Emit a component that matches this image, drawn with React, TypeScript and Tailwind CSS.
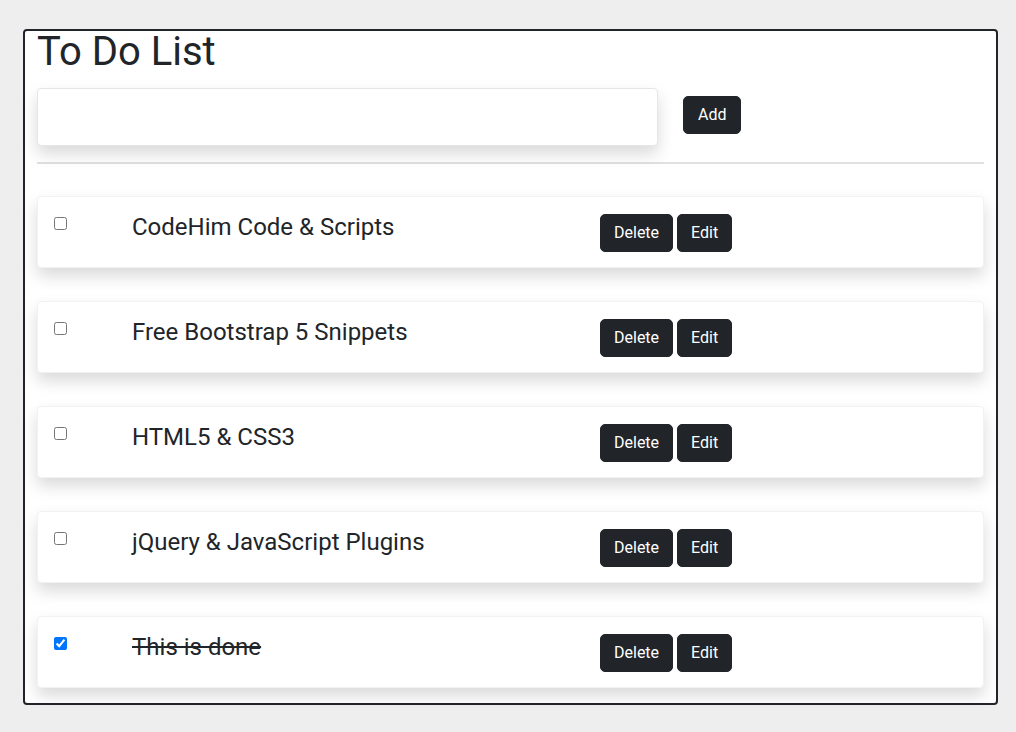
import React, { useState } from "react"

interface Todo {
  id: number
  text: string
  done: boolean
}

const initTodos: Todo[] = [
  { id: 1, text: "CodeHim Code & Scripts", done: false },
  { id: 2, text: "Free Bootstrap 5 Snippets", done: false },
  { id: 3, text: "HTML5 & CSS3", done: false },
  { id: 4, text: "jQuery & JavaScript Plugins", done: false },
  { id: 5, text: "This is done", done: true }
]

const btn =
  "py-1.5 text-base leading-6 text-white bg-[#212529] border border-[#212529] rounded-[5px]"

const App: React.FC = () => {
  const [todos, setTodos] = useState<Todo[]>(initTodos)
  const [draft, setDraft] = useState("")

  const toggle = (id: number) =>
    setTodos((prev) =>
      prev.map((t) => (t.id === id ? { ...t, done: !t.done } : t))
    )

  const remove = (id: number) =>
    setTodos((prev) => prev.filter((t) => t.id !== id))

  const add = () => {
    if (!draft.trim()) return
    setTodos((prev) => [...prev, { id: Date.now(), text: draft, done: false }])
    setDraft("")
  }

  return (
    <div
      className="min-h-[732px] bg-[#eeeeee] pt-[29px] pl-[23px] text-[#212529]"
      style={{ fontFamily: "Roboto, 'Liberation Sans', sans-serif" }}
    >
      <div className="w-[975px] bg-white border-2 border-[#212529] rounded-[4px] px-3 pt-[1px] pb-[15px]">
        <h1 className="text-[40px] leading-none font-normal">To Do List</h1>

        <div className="flex items-center mt-4">
          <input
            value={draft}
            onChange={(e) => setDraft(e.target.value)}
            className="w-[621px] h-[58px] px-3 text-base bg-white border border-[#e6e6e6] rounded-[4px] shadow-[0_0.5rem_1rem_rgba(0,0,0,0.15)] outline-none"
          />
          <button className={`${btn} px-[14px] ml-[25px] -mt-1`} onClick={add}>
            Add
          </button>
        </div>

        <div className="h-[2px] bg-[#e0e0e0] mt-4 mb-[32px]" />

        <div className="flex flex-col gap-[33px]">
          {todos.map((todo) => (
            <div
              key={todo.id}
              className="flex items-start h-[72px] pl-4 py-[17px] bg-white border border-[#f2f2f2] rounded-[4px] shadow-[0_0.5rem_1rem_rgba(0,0,0,0.15)]"
            >
              <div className="w-[78px] pt-[3px]">
                <input
                  type="checkbox"
                  checked={todo.done}
                  onChange={() => toggle(todo.id)}
                  className="block m-0 w-[13px] h-[13px]"
                />
              </div>
              <div
                className={`w-[468px] text-2xl leading-7 -mt-[1px] ${
                  todo.done ? "line-through" : ""
                }`}
              >
                {todo.text}
              </div>
              <div className="flex gap-1">
                <button
                  className={`${btn} px-[13px]`}
                  onClick={() => remove(todo.id)}
                >
                  Delete
                </button>
                <button className={`${btn} px-[13px]`}>Edit</button>
              </div>
            </div>
          ))}
        </div>
      </div>
    </div>
  )
}

export default App
